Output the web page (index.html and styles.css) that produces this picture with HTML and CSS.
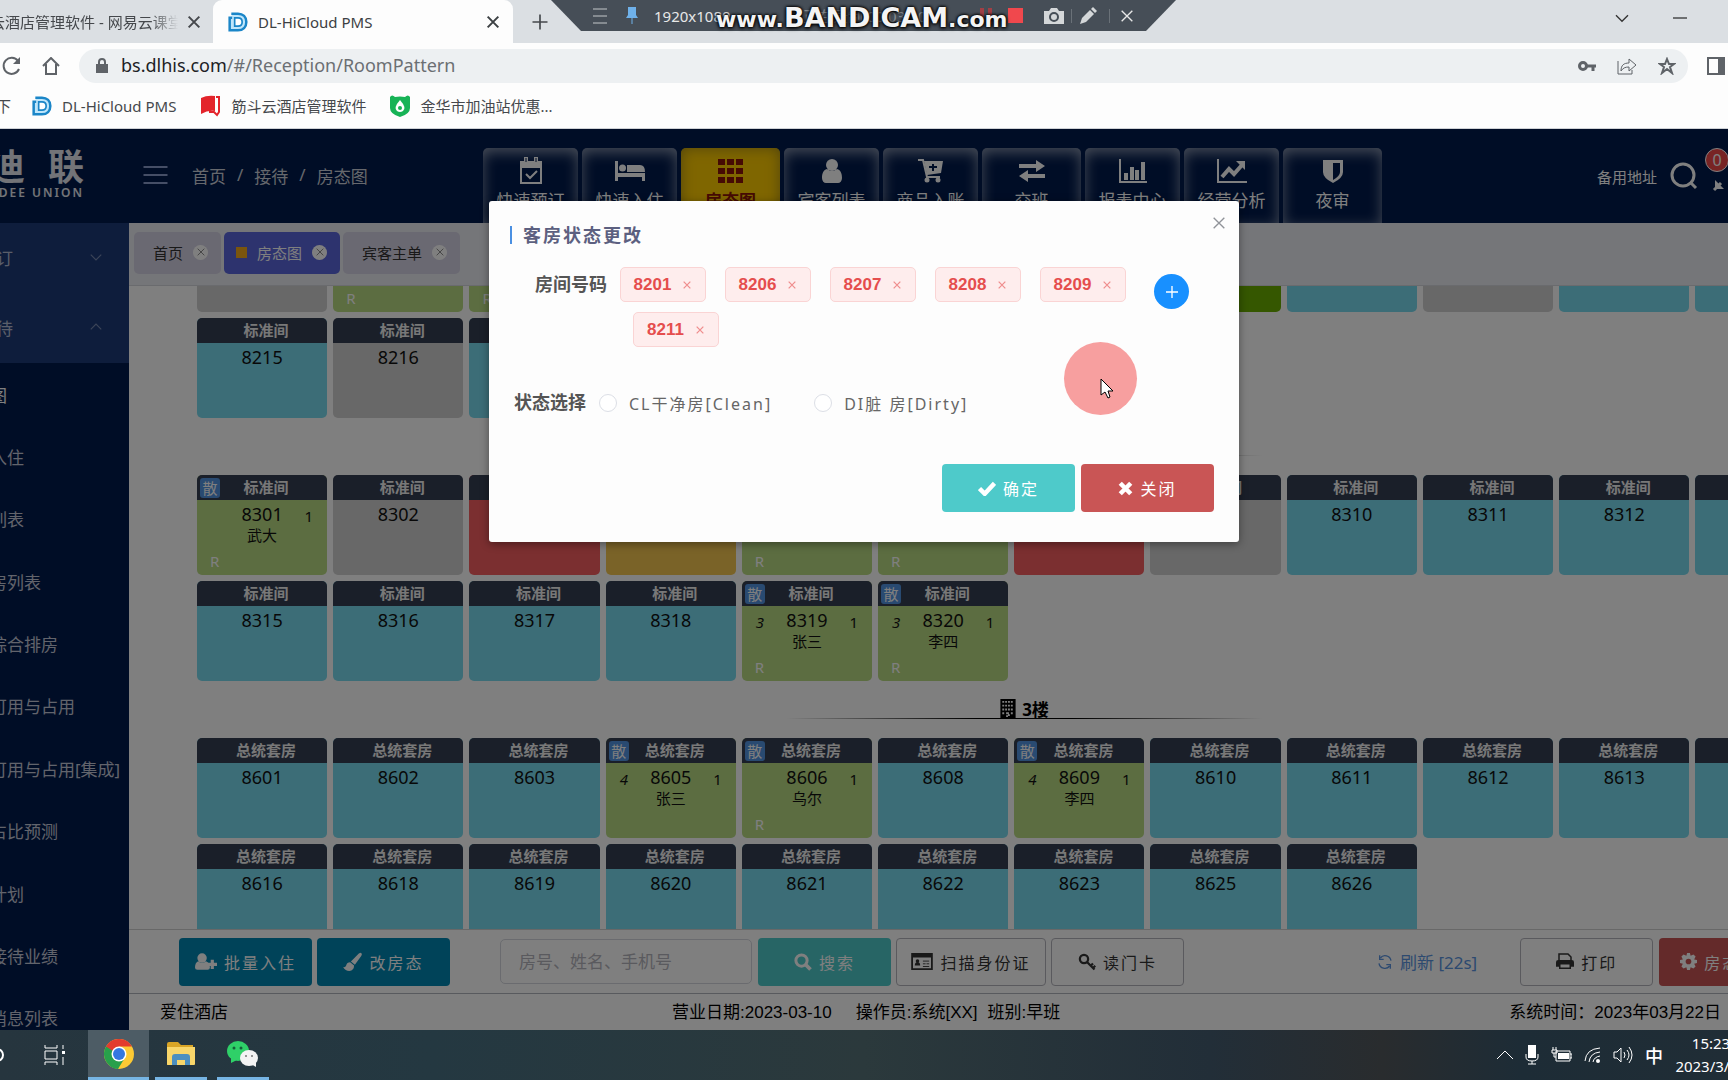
FILE: index.html
```html
<!DOCTYPE html>
<html lang="zh-CN">
<head>
<meta charset="utf-8">
<title>DL-HiCloud PMS</title>
<link rel="stylesheet" href="styles.css">
</head>
<body>
<svg class="defs" aria-hidden="true">
  <symbol id="i-x" viewBox="0 0 24 24"><path d="M4 4l16 16M20 4L4 20" fill="none" stroke="currentColor" stroke-width="2"/></symbol>
  <symbol id="i-xb" viewBox="0 0 24 24"><path d="M4 4l16 16M20 4L4 20" fill="none" stroke="currentColor" stroke-width="3"/></symbol>
  <symbol id="i-down" viewBox="0 0 24 24"><path d="M3 8l9 9 9-9" fill="none" stroke="currentColor" stroke-width="2"/></symbol>
  <symbol id="i-up" viewBox="0 0 24 24"><path d="M3 16l9-9 9 9" fill="none" stroke="currentColor" stroke-width="2"/></symbol>
  <symbol id="i-dl" viewBox="0 0 24 24"><path d="M4 2h8c6 0 10 4 10 10s-4 10-10 10H2V7h3" fill="#bfe6fb" stroke="#1b86c8" stroke-width="3"/><path d="M8 7h4c3 0 5 2 5 5s-2 5-5 5H8z" fill="#fff" stroke="#1b86c8" stroke-width="2"/></symbol>
  <symbol id="i-burger" viewBox="0 0 24 20"><path d="M0 2h24M0 10h24M0 18h24" stroke="currentColor" stroke-width="2"/></symbol>
  <symbol id="i-calendar" viewBox="0 0 24 28"><path d="M2 5h20v21H2z" fill="none" stroke="currentColor" stroke-width="2"/><path d="M1 4h22v7H1zM5 0h4v7H5zM15 0h4v7h-4z" fill="currentColor"/><path d="M7 1v4M17 1v4" stroke="#001a4c" stroke-width="1"/><path d="M7 17l4 4 7-7" fill="none" stroke="currentColor" stroke-width="2"/></symbol>
  <symbol id="i-bed" viewBox="0 0 30 24"><path d="M0 2h3v12h27v8h-3v-4H3v4H0z" fill="currentColor"/><circle cx="7.500" cy="9" r="3.500" fill="currentColor"/><path d="M12 6h13q5 0 5 7H12z" fill="currentColor"/></symbol>
  <symbol id="i-grid" viewBox="0 0 26 26"><path d="M0 1h7v6H0zM9 1h7v6H9zM18 1h7v6h-7zM0 10h7v6H0zM9 10h7v6H9zM18 10h7v6h-7zM0 19h7v6H0zM9 19h7v6H9zM18 19h7v6h-7z" fill="currentColor"/></symbol>
  <symbol id="i-user" viewBox="0 0 20 24"><circle cx="10" cy="6" r="6" fill="currentColor"/><path d="M5 10q5 4 10 0c4 1 5 5 5 9 0 3-2 5-4 5H4c-2 0-4-2-4-5 0-4 1-8 5-9z" fill="currentColor"/></symbol>
  <symbol id="i-cart" viewBox="0 0 26 24"><path d="M0 1h5l4 17h13" fill="none" stroke="currentColor" stroke-width="2"/><path d="M6 2h19l-2 12-14 2z" fill="currentColor"/><path d="M15 5v7M11 8h8" stroke="#001a4c" stroke-width="2"/><circle cx="9" cy="21" r="2.500" fill="currentColor"/><circle cx="20" cy="21" r="2.500" fill="currentColor"/></symbol>
  <symbol id="i-swap" viewBox="0 0 26 24"><path d="M0 5h17V1l9 6-9 6V9H0zM26 15H9v-4l-9 6 9 6v-4h17z" fill="currentColor"/></symbol>
  <symbol id="i-bars" viewBox="0 0 28 24"><path d="M1 0v23h27" fill="none" stroke="currentColor" stroke-width="2"/><path d="M5 14h4v7H5zM11 8h4v13h-4zM16 11h4v10h-4zM22 3h4v18h-4z" fill="currentColor"/></symbol>
  <symbol id="i-line" viewBox="0 0 30 24"><path d="M1 0v23h29" fill="none" stroke="currentColor" stroke-width="2"/><path d="M5 18l7-8 5 5 8-9" fill="none" stroke="currentColor" stroke-width="4"/><path d="M19 2h9v9z" fill="currentColor"/></symbol>
  <symbol id="i-shield" viewBox="0 0 20 24"><path d="M0 1h20v12q0 6-10 11Q0 19 0 13z" fill="currentColor"/><path d="M10 4h7v9q0 4-7 8z" fill="#001a4c"/></symbol>
  <symbol id="i-search" viewBox="0 0 24 24"><circle cx="10" cy="10" r="7.500" fill="none" stroke="currentColor" stroke-width="4"/><path d="M15 15l7 7" stroke="currentColor" stroke-width="5"/></symbol>
  <symbol id="i-find" viewBox="0 0 28 28"><circle cx="13" cy="13" r="11" fill="none" stroke="currentColor" stroke-width="3"/><path d="M20 20l6 6" stroke="currentColor" stroke-width="3"/></symbol>
  <symbol id="i-building" viewBox="0 0 16 20"><path d="M0 0h16v20H0z" fill="currentColor"/><path d="M2 3h12M2 7h12M2 11h12M2 15h3M11 15h3M7 15h2v3H7z" stroke="#fff" stroke-width="2" stroke-dasharray="2 1"/></symbol>
  <symbol id="i-adduser" viewBox="0 0 28 22"><circle cx="9" cy="6" r="6" fill="currentColor"/><path d="M4 10q5 4 10 0 5 2 5 8 0 3-3 3H3q-3 0-3-3 0-6 4-8z" fill="currentColor"/><path d="M22 8v12M16 14h12" stroke="currentColor" stroke-width="4"/></symbol>
  <symbol id="i-brush" viewBox="0 0 24 24"><path d="M22 1q3 1 1 4l-8 11-5-4L20 2zM9 13l5 4q0 6-6 7-5 0-8-5 3 1 4-2 1-4 5-4z" fill="currentColor"/></symbol>
  <symbol id="i-id" viewBox="0 0 24 20"><path d="M1 1h22v17H1z" fill="none" stroke="currentColor" stroke-width="2"/><path d="M1 1h22v4H1zM4 14q0-4 3-4t3 4z" fill="currentColor"/><circle cx="7" cy="9" r="2" fill="currentColor"/><path d="M13 9h7M13 12h3M17 12h3M13 15h7" stroke="currentColor" stroke-width="1"/></symbol>
  <symbol id="i-key" viewBox="0 0 24 24"><circle cx="8" cy="8" r="5.500" fill="none" stroke="currentColor" stroke-width="3"/><path d="M12 12l10 10M17 17l3-3M20 20l3-3" stroke="currentColor" stroke-width="3"/></symbol>
  <symbol id="i-refresh" viewBox="0 0 24 24"><path d="M21 10A9 9 0 0 0 5 6M3 14a9 9 0 0 0 16 4" fill="none" stroke="currentColor" stroke-width="2"/><path d="M4 2v6h6M20 22v-6h-6" fill="none" stroke="currentColor" stroke-width="2"/></symbol>
  <symbol id="i-print" viewBox="0 0 24 22"><path d="M4 10V1h12l4 4v5" fill="none" stroke="currentColor" stroke-width="2"/><path d="M0 12q0-3 3-3h18q3 0 3 3v6H0z" fill="currentColor"/><path d="M5 14h14v6H5z" fill="#fff" stroke="currentColor" stroke-width="2"/></symbol>
  <symbol id="i-gear" viewBox="0 0 24 24"><path d="M10 0h4l1 4 4-2 3 3-2 4 4 1v4l-4 1 2 4-3 3-4-2-1 4h-4l-1-4-4 2-3-3 2-4-4-1v-4l4-1-2-4 3-3 4 2z" fill="currentColor"/><circle cx="12" cy="12" r="4" fill="#c95555"/></symbol>
  <symbol id="i-check" viewBox="0 0 24 20"><path d="M2 10l7 7L22 3" fill="none" stroke="currentColor" stroke-width="6"/></symbol>
  <symbol id="i-times" viewBox="0 0 20 20"><path d="M3 3l14 14M17 3L3 17" fill="none" stroke="currentColor" stroke-width="6"/></symbol>
  <symbol id="i-plus" viewBox="0 0 24 24"><path d="M12 3v18M3 12h18" stroke="currentColor" stroke-width="2"/></symbol>
</svg>

<header class="browser">
  <div class="tabstrip">
    <div class="btab back-tab"><span class="btab-title">云酒店管理软件 - 网易云课堂</span><button class="ico-btn" aria-label="关闭标签页"><svg width="16" height="16"><use href="#i-xb"/></svg></button></div>
    <div class="btab front-tab"><svg width="20" height="22"><use href="#i-dl"/></svg><span class="btab-title">DL-HiCloud PMS</span><button class="ico-btn" aria-label="关闭标签页"><svg width="16" height="16"><use href="#i-xb"/></svg></button></div>
    <button class="ico-btn new-tab" aria-label="新标签页"><svg width="20" height="20"><use href="#i-plus"/></svg></button>
    <div class="win-ctl">
      <svg width="16" height="16"><use href="#i-down"/></svg>
      <svg width="14" height="16"><path d="M0 8h14" stroke="#000" stroke-width="1"/></svg>
    </div>
  </div>
  <div class="toolbar">
    <svg width="20" height="20" viewBox="0 0 20 20"><path d="M16 5a8 8 0 1 0 1 8" fill="none" stroke="#5f6368" stroke-width="2"/><path d="M18 1v7h-7z" fill="#5f6368"/></svg>
    <svg class="home" width="18" height="18" viewBox="0 0 18 18"><path d="M1 9l8-8 8 8M4 7v10h10V7" fill="none" stroke="#5f6368" stroke-width="2"/></svg>
    <div class="omnibox">
      <svg width="12" height="15" viewBox="0 0 12 15"><path d="M0 6h12v9H0z" fill="#5f6368"/><path d="M3 6V4a3 3 0 0 1 6 0v2" fill="none" stroke="#5f6368" stroke-width="2"/></svg>
      <span class="url">bs.dlhis.com<i>/#/Reception/RoomPattern</i></span>
      <svg width="18" height="12" viewBox="0 0 18 12"><circle cx="5" cy="6" r="3.500" fill="none" stroke="#5f6368" stroke-width="3"/><path d="M8 6h10M15 6v5" stroke="#5f6368" stroke-width="3"/></svg>
      <svg width="20" height="18" viewBox="0 0 20 18"><path d="M1 4v13h14v-4M4 14c0-6 3-8 8-8V2l7 6-7 6v-4c-4 0-6 1-8 4z" fill="none" stroke="#5f6368" stroke-width="1"/></svg>
      <svg width="18" height="18" viewBox="0 0 18 18"><path d="M9 2l2 5h5l-4 3 2 6-5-4-5 4 2-6-4-3h5z" fill="none" stroke="#5f6368" stroke-width="2"/></svg>
    </div>
    <svg width="18" height="18" viewBox="0 0 18 18"><path d="M1 1h16v16H1z" fill="none" stroke="#5f6368" stroke-width="2"/><path d="M11 1h6v16h-6z" fill="#5f6368"/></svg>
  </div>
  <nav class="bookmarks">
    <a href="#" class="cut">下</a>
    <a href="#"><svg width="20" height="22"><use href="#i-dl"/></svg>DL-HiCloud PMS</a>
    <a href="#"><svg width="21" height="22" viewBox="0 0 21 22"><path d="M1 3q6-3 14-2v15q-7-1-14 3z" fill="#e3242b"/><path d="M16 2h3v15l-2 3-3-3H9" fill="none" stroke="#e3242b" stroke-width="2"/></svg>筋斗云酒店管理软件</a>
    <a href="#"><svg width="20" height="22" viewBox="0 0 20 22"><path d="M0 2q2-3 5 0 5-1 10 0 3-3 5 0v11q0 6-10 9Q0 19 0 13z" fill="#17b356"/><path d="M10 5q7 8 3 11-3 2-6 0-4-3 3-11z" fill="#fff"/><circle cx="10" cy="13" r="2" fill="#17b356"/></svg>金华市加油站优惠...</a>
  </nav>
</header>

<div class="recorder">
  <svg class="rec-bg" viewBox="0 0 625 31" preserveAspectRatio="none"><path d="M0 0h625l-30 31H30z" fill="#464e57"/></svg>
  <div class="rec-row">
    <svg width="14" height="16" viewBox="0 0 14 16"><path d="M0 1h14M0 8h14M0 15h14" stroke="#c3c7ca" stroke-width="1"/></svg>
    <svg class="pin" width="12" height="17" viewBox="0 0 12 17"><path d="M2 0h8v8l2 3H0l2-3z" fill="#6fb1ea"/><path d="M6 11v6" stroke="#6fb1ea"/></svg>
    <span class="rec-size">1920x1080</span>
    <span class="rec-time">正在录制 00:03:20</span>
    <svg width="12" height="16" viewBox="0 0 12 16"><path d="M0 0h4v16H0zM8 0h4v16H8z" fill="#a13f45"/></svg>
    <svg class="stop" width="15" height="15" viewBox="0 0 15 15"><path d="M0 0h15v15H0z" fill="#f0484d"/></svg>
    <svg class="cam" width="20" height="16" viewBox="0 0 20 16"><path d="M0 3h5l2-3h6l2 3h5v13H0z" fill="#d4d7d9"/><circle cx="10" cy="9" r="4" fill="none" stroke="#464e57" stroke-width="2"/></svg>
    <span class="sep"></span>
    <svg width="17" height="17" viewBox="0 0 17 17"><path d="M0 17l2-6 8-8 4 4-8 8zM11 2l2-2 4 4-2 2z" fill="#d4d7d9"/></svg>
    <span class="sep wide-sep"></span>
    <svg width="16" height="16"><use href="#i-x"/></svg>
  </div>
  <div class="watermark">www.<b>BANDICAM</b>.com</div>
</div>

<div class="app">
  <header class="app-head">
    <div class="logo"><strong><span>迪</span><span>联</span></strong><small>DEE UNION</small></div>
    <div class="crumb-area">
      <svg width="25" height="20"><use href="#i-burger"/></svg>
      <nav class="crumbs"><a href="#">首页</a><span>/</span><a href="#">接待</a><span>/</span><a href="#">房态图</a></nav>
    </div>
    <nav class="tiles">
      <a href="#"><svg width="24" height="28"><use href="#i-calendar"/></svg>快速预订</a>
      <a href="#"><svg width="30" height="28"><use href="#i-bed"/></svg>快速入住</a>
      <a href="#" class="wide on"><svg width="26" height="28"><use href="#i-grid"/></svg>房态图</a>
      <a href="#"><svg width="20" height="28"><use href="#i-user"/></svg>宾客列表</a>
      <a href="#"><svg width="26" height="28"><use href="#i-cart"/></svg>商品入账</a>
      <a href="#" class="wide"><svg width="26" height="28"><use href="#i-swap"/></svg>交班</a>
      <a href="#"><svg width="28" height="28"><use href="#i-bars"/></svg>报表中心</a>
      <a href="#"><svg width="30" height="28"><use href="#i-line"/></svg>经营分析</a>
      <a href="#" class="wide"><svg width="20" height="28"><use href="#i-shield"/></svg>夜审</a>
    </nav>
    <div class="head-right">
      <a href="#">备用地址</a>
      <svg width="28" height="28"><use href="#i-find"/></svg>
      <div class="full"><svg width="26" height="26" viewBox="0 0 26 26"><path d="M3 23l7-7" fill="none" stroke="currentColor" stroke-width="3"/><path d="M4 13l9 9H4z" fill="currentColor"/></svg><em>0</em></div>
    </div>
  </header>

  <div class="app-body">
    <aside class="side">
      <a class="group" href="#">订<svg width="14" height="14"><use href="#i-down"/></svg></a>
      <a class="group" href="#">待<svg width="14" height="14"><use href="#i-up"/></svg></a>
      <nav class="sub">
        <a href="#" class="cur">图</a><a href="#">入住</a><a href="#">列表</a><a href="#">房列表</a><a href="#">综合排房</a><a href="#">可用与占用</a><a href="#">可用与占用[集成]</a><a href="#">占比预测</a><a href="#">计划</a><a href="#">接待业绩</a><a href="#">消息列表</a>
      </nav>
    </aside>

    <main class="main">
      <div class="page-tabs">
        <a href="#">首页<i><svg width="10" height="10"><use href="#i-x"/></svg></i></a>
        <a href="#" class="on"><span class="mark"></span>房态图<i><svg width="10" height="10"><use href="#i-x"/></svg></i></a>
        <a href="#">宾客主单<i><svg width="10" height="10"><use href="#i-x"/></svg></i></a>
      </div>

      <section class="rooms">
        <div class="floors">
          <div class="grid">
            <div class="room dirty"></div>
            <div class="room stay"><span class="flag">R</span></div>
            <div class="room stay"><span class="flag">R</span></div>
            <div class="room dirty"></div>
            <div class="room dirty"></div>
            <div class="room dirty"></div>
            <div class="room dirty"></div>
            <div class="room arrive"></div>
            <div class="room"></div>
            <div class="room dirty"></div>
            <div class="room"></div>
            <div class="room"></div>
            <div class="room"></div>
            <div class="room"></div>
            <div class="room"><h3>标准间</h3><b>8215</b></div>
            <div class="room dirty"><h3>标准间</h3><b>8216</b></div>
            <div class="room"><h3>标准间</h3><b>8217</b></div>
          </div>
          <h2 class="floor"><span><svg width="16" height="19"><use href="#i-building"/></svg>2楼</span></h2>
          <div class="grid">
            <div class="room stay"><span class="kind">散</span><h3>标准间</h3><b>8301</b><span class="num">1</span><p>武大</p><span class="flag">R</span></div>
            <div class="room dirty"><h3>标准间</h3><b>8302</b></div>
            <div class="room repair"><h3>标准间</h3><b>8303</b></div>
            <div class="room hold"><h3>标准间</h3><b>8305</b></div>
            <div class="room stay"><h3>标准间</h3><b>8306</b><span class="flag">R</span></div>
            <div class="room stay"><h3>标准间</h3><b>8307</b><span class="flag">R</span></div>
            <div class="room repair"><h3>标准间</h3><b>8308</b></div>
            <div class="room dirty"><h3>标准间</h3><b>8309</b></div>
            <div class="room"><h3>标准间</h3><b>8310</b></div>
            <div class="room"><h3>标准间</h3><b>8311</b></div>
            <div class="room"><h3>标准间</h3><b>8312</b></div>
            <div class="room"><h3></h3></div>
            <div class="room"><h3></h3></div>
            <div class="room"><h3></h3></div>
            <div class="room"><h3>标准间</h3><b>8315</b></div>
            <div class="room"><h3>标准间</h3><b>8316</b></div>
            <div class="room"><h3>标准间</h3><b>8317</b></div>
            <div class="room"><h3>标准间</h3><b>8318</b></div>
            <div class="room stay"><span class="kind">散</span><h3>标准间</h3><i class="days">3</i><b>8319</b><span class="num">1</span><p>张三</p><span class="flag">R</span></div>
            <div class="room stay"><span class="kind">散</span><h3>标准间</h3><i class="days">3</i><b>8320</b><span class="num">1</span><p>李四</p><span class="flag">R</span></div>
          </div>
          <h2 class="floor"><span><svg width="16" height="19"><use href="#i-building"/></svg>3楼</span></h2>
          <div class="grid">
            <div class="room"><h3>总统套房</h3><b>8601</b></div>
            <div class="room"><h3>总统套房</h3><b>8602</b></div>
            <div class="room"><h3>总统套房</h3><b>8603</b></div>
            <div class="room stay"><span class="kind">散</span><h3>总统套房</h3><i class="days">4</i><b>8605</b><span class="num">1</span><p>张三</p></div>
            <div class="room stay"><span class="kind">散</span><h3>总统套房</h3><b>8606</b><span class="num">1</span><p>乌尔</p><span class="flag">R</span></div>
            <div class="room"><h3>总统套房</h3><b>8608</b></div>
            <div class="room stay"><span class="kind">散</span><h3>总统套房</h3><i class="days">4</i><b>8609</b><span class="num">1</span><p>李四</p></div>
            <div class="room"><h3>总统套房</h3><b>8610</b></div>
            <div class="room"><h3>总统套房</h3><b>8611</b></div>
            <div class="room"><h3>总统套房</h3><b>8612</b></div>
            <div class="room"><h3>总统套房</h3><b>8613</b></div>
            <div class="room"><h3></h3></div>
            <div class="room"><h3></h3></div>
            <div class="room"><h3></h3></div>
            <div class="room"><h3>总统套房</h3><b>8616</b></div>
            <div class="room"><h3>总统套房</h3><b>8618</b></div>
            <div class="room"><h3>总统套房</h3><b>8619</b></div>
            <div class="room"><h3>总统套房</h3><b>8620</b></div>
            <div class="room"><h3>总统套房</h3><b>8621</b></div>
            <div class="room"><h3>总统套房</h3><b>8622</b></div>
            <div class="room"><h3>总统套房</h3><b>8623</b></div>
            <div class="room"><h3>总统套房</h3><b>8625</b></div>
            <div class="room"><h3>总统套房</h3><b>8626</b></div>
          </div>
        </div>
      </section>

      <div class="actions">
        <button class="btn blue"><svg width="22" height="18"><use href="#i-adduser"/></svg>批量入住</button>
        <button class="btn blue"><svg width="19" height="19"><use href="#i-brush"/></svg>改房态</button>
        <input class="search" type="text" placeholder="房号、姓名、手机号" aria-label="房号、姓名、手机号">
        <button class="btn teal"><svg width="18" height="18"><use href="#i-search"/></svg>搜索</button>
        <button class="btn line id"><svg width="22" height="18"><use href="#i-id"/></svg>扫描身份证</button>
        <button class="btn line"><svg width="18" height="18"><use href="#i-key"/></svg>读门卡</button>
        <a class="refresh" href="#"><svg width="16" height="16"><use href="#i-refresh"/></svg>刷新 [22s]</a>
        <button class="btn line"><svg width="18" height="17"><use href="#i-print"/></svg>打印</button>
        <button class="btn red set"><svg width="17" height="17"><use href="#i-gear"/></svg>房态</button>
      </div>

      <footer class="status">
        <span class="hotel">爱住酒店</span>
        <span class="shift"><span>营业日期:2023-03-10</span><span>操作员:系统[XX]</span><span>班别:早班</span></span>
        <span class="clock">系统时间：2023年03月22日</span>
      </footer>
    </main>
  </div>

  <div class="mask">
    <section class="modal" role="dialog" aria-label="客房状态更改">
      <header><h1>客房状态更改</h1><button class="ico-btn" aria-label="关闭窗口"><svg width="16" height="16"><use href="#i-x"/></svg></button></header>
      <div class="field tags-field">
        <span class="label">房间号码</span>
        <div class="tags">
          <span class="tag">8201<svg width="10" height="10"><use href="#i-xb"/></svg></span>
          <span class="tag">8206<svg width="10" height="10"><use href="#i-xb"/></svg></span>
          <span class="tag">8207<svg width="10" height="10"><use href="#i-xb"/></svg></span>
          <span class="tag">8208<svg width="10" height="10"><use href="#i-xb"/></svg></span>
          <span class="tag">8209<svg width="10" height="10"><use href="#i-xb"/></svg></span>
          <span class="tag second">8211<svg width="10" height="10"><use href="#i-xb"/></svg></span>
        </div>
        <button class="add" aria-label="添加房间"><svg width="16" height="16"><use href="#i-plus"/></svg></button>
      </div>
      <div class="field state-field">
        <span class="label">状态选择</span>
        <label class="radio"><input type="radio" name="state">CL干净房[Clean]</label>
        <label class="radio"><input type="radio" name="state">DI脏 房[Dirty]</label>
      </div>
      <div class="modal-foot">
        <button class="btn ok"><svg width="18" height="15"><use href="#i-check"/></svg>确定</button>
        <button class="btn red"><svg width="15" height="15"><use href="#i-times"/></svg>关闭</button>
      </div>
      <div class="pointer"><svg width="14" height="22" viewBox="0 0 14 22"><path d="M1 1v16l4-3 3 6 2-1-2-6h5z" fill="#fff" stroke="#000"/></svg></div>
    </section>
  </div>
</div>

<footer class="taskbar">
  <svg class="cortana" width="5" height="16" viewBox="0 0 5 16"><circle cx="-3" cy="8" r="6" fill="none" stroke="#fff" stroke-width="2"/></svg>
  <svg class="views" width="22" height="20" viewBox="0 0 22 20"><path d="M1 0v3h12V0M1 20v-3h12v3M1 6h12v8H1zM19 0v4M19 12v8" fill="none" stroke="#fff"/><path d="M18 6h3v3h-3z" fill="#fff"/></svg>
  <button class="task active" aria-label="Chrome"><svg width="30" height="30" viewBox="0 0 30 30"><circle cx="15" cy="15" r="15" fill="#fcc934"/><path d="M2 7.500A15 15 0 0 0 14 30l7-11.500L15 15z" fill="#28a04b"/><path d="M2 7.500L9 19l6-4V7.500z" fill="#28a04b"/><path d="M2 7.500A15 15 0 0 1 28 7.500H15L9 12z" fill="#e33b2e"/><circle cx="15" cy="15" r="7.500" fill="#fff"/><circle cx="15" cy="15" r="6" fill="#3477e0"/></svg></button>
  <button class="task" aria-label="文件资源管理器"><svg width="28" height="24" viewBox="0 0 28 24"><path d="M0 2q0-2 2-2h9l3 3h12v20H0z" fill="#d9a526"/><path d="M0 5h28v17q0 1-1 1H1q-1 0-1-1z" fill="#f8d66a"/><path d="M5 23v-8q0-3 3-3h12q3 0 3 3v8h-5v-5h-8v5z" fill="#4c8fc0"/></svg></button>
  <button class="task" aria-label="微信"><svg width="32" height="26" viewBox="0 0 32 26"><ellipse cx="11" cy="10" rx="11" ry="10" fill="#2fd068"/><path d="M4 16l0 6 6-3z" fill="#2fd068"/><ellipse cx="22" cy="17" rx="9" ry="8" fill="#f3f3f3"/><path d="M24 23l5 3v-6z" fill="#f3f3f3"/><circle cx="7" cy="7" r="1.500" fill="#15603a"/><circle cx="14" cy="7" r="1.500" fill="#15603a"/><circle cx="19" cy="15" r="1" fill="#777"/><circle cx="25" cy="15" r="1" fill="#777"/></svg></button>
  <div class="tray">
    <svg width="16" height="18" viewBox="0 0 16 18"><path d="M0 13l8-8 8 8" fill="none" stroke="#fff"/></svg>
    <svg width="14" height="20" viewBox="0 0 14 20"><path d="M3 0h8v13H3z" fill="#fff"/><path d="M1 9v3q0 4 6 4t6-4V9M7 16v3M3 19h8" fill="none" stroke="#fff"/></svg>
    <svg width="21" height="16" viewBox="0 0 21 16"><path d="M5 4h14v10H5zM19 7h2v4h-2M2 0v3M5 0v3M1 3h5v3H1zM3 6v4h2" fill="none" stroke="#fff"/><path d="M7 6h11v6H7z" fill="#fff"/></svg>
    <svg width="17" height="16" viewBox="0 0 17 16"><path d="M1 14Q2 2 16 1M5 15Q6 6 16 5M9 15q1-5 7-6" fill="none" stroke="#fff"/><circle cx="14" cy="14" r="2" fill="#fff"/></svg>
    <svg width="20" height="18" viewBox="0 0 20 18"><path d="M1 6h3l4-4v14l-4-4H1zM11 6q2 3 0 6M14 4q4 5 0 10M16 1q6 8 0 16" fill="none" stroke="#fff"/></svg>
    <span class="ime">中</span>
    <div class="time"><span>15:23</span><span>2023/3/22</span></div>
  </div>
</footer>
</body>
</html>
```
FILE: styles.css
```css
* { box-sizing: border-box; }
html, body { height: 100%; }
body {
  margin: 0;
  display: flex;
  flex-direction: column;
  overflow: hidden;
  font-family: "Noto Sans", "Noto Sans CJK SC", sans-serif;
  font-size: 17px;
  color: #000;
}
a { color: inherit; text-decoration: none; }
h1, h2, h3, p { margin: 0; }
button, input { font: inherit; margin: 0; }
svg { flex: none; display: block; }
.defs { position: absolute; width: 0; height: 0; }
.ico-btn { border: 0; padding: 0; background: none; color: inherit; display: flex; }

/* Browser frame */
.browser { flex: none; background: #fdfdfd; font-size: 15px; color: #45484c; }
.tabstrip { height: 43px; background: #dbdfe3; display: flex; align-items: center; }
.btab { display: flex; align-items: center; height: 43px; }
.btab .btab-title { flex: 1; white-space: nowrap; overflow: hidden; }
.back-tab { width: 213px; padding-right: 11px; }
.back-tab .btab-title {
  margin-left: -10px;
  margin-right: 8px;
  -webkit-mask-image: linear-gradient(90deg, #000 85%, transparent);
  mask-image: linear-gradient(90deg, #000 85%, transparent);
}
.front-tab { width: 300px; padding: 0 12px 0 15px; gap: 10px; background: #fdfdfd; border-radius: 9px 9px 0 0; color: #3c4043; }
.new-tab { margin-left: 17px; }
.win-ctl { margin-left: auto; margin-right: 41px; margin-top: -8px; display: flex; gap: 43px; color: #333; }
.toolbar { height: 45px; display: flex; align-items: center; padding: 0 3px 0 2px; }
.home { margin: 0 19px 0 20px; }
.omnibox { flex: 1; height: 34px; margin: 0 19px 0 0; padding: 0 12px 0 17px; border-radius: 17px; background: #edf0f2; display: flex; align-items: center; gap: 21px; }
.omnibox .url { flex: 1; margin-left: -8px; padding-bottom: 2px; font-size: 18px; color: #202124; }
.url i { font-style: normal; color: #6b6f73; }
.bookmarks { height: 41px; border-bottom: 1px solid #cfd2d6; display: flex; align-items: center; gap: 21px; padding-bottom: 5px; }
.bookmarks a { display: flex; align-items: center; gap: 10px; }
.bookmarks a + a + a { margin-left: 3px; }
.bookmarks .cut { margin-left: -4px; }

/* Screen recorder strip, floats over the browser frame */
.recorder { position: absolute; z-index: 5; top: 0; left: 551px; width: 625px; height: 31px; }
.rec-bg { position: absolute; width: 100%; height: 100%; }
.rec-row { position: relative; height: 31px; display: flex; align-items: center; padding-left: 42px; font-size: 15px; white-space: nowrap; color: #e8e8e8; }
.pin { margin: 0 16px 0 19px; }
.rec-size { width: 77px; }
.rec-time { margin: 0 27px 0 72px; width: 150px; overflow: hidden; color: #8b9095; }
.stop { margin-left: 16px; }
.cam { margin: 0 7px 0 21px; }
.sep { width: 1px; height: 14px; margin-right: 8px; background: #6a7178; }
.wide-sep { margin: 0 9px 0 12px; }
.watermark { position: absolute; left: 165px; top: 2px; font: bold 22px/32px "DejaVu Sans", sans-serif; color: #f4f4f4; text-shadow: 0 0 3px #000, 0 0 3px #000, 0 1px 4px #000; white-space: nowrap; }
.watermark b { font-size: 27px; }

/* Application */
.app { position: relative; flex: 1; min-height: 0; display: flex; flex-direction: column; overflow: hidden; background: #fff; }
.app-head { flex: none; height: 94px; background: #001a4c; color: #e6e9f0; display: flex; }
.logo { width: 84px; height: 94px; display: flex; flex-direction: column; align-items: flex-end; padding-top: 19px; margin-right: 59px; white-space: nowrap; }
.logo strong { font-size: 36px; line-height: 38px; display: flex; gap: 23px; }
.logo small { font-size: 12px; line-height: 14px; letter-spacing: 2px; font-weight: 600; }
.crumb-area { width: 340px; display: flex; align-items: center; gap: 24px; padding-bottom: 2px; color: #8b9ccc; }
.crumbs { display: flex; gap: 11px; color: #cdd1da; }
.tiles { display: flex; gap: 4px; padding-top: 19px; }
.tiles a { width: 95px; display: flex; flex-direction: column; align-items: center; gap: 4px; padding-top: 9px; line-height: 24px; border-radius: 5px 5px 0 0; box-shadow: inset 0 4px 14px rgba(255,255,255,.55); color: #fff; white-space: nowrap; }
.tiles .wide { width: 99px; }
.tiles .on { background: #ffcc00; color: #8c1408; font-weight: bold; box-shadow: inset 0 0 14px rgba(140,120,30,.8); }
.head-right { margin-left: auto; display: flex; align-items: center; gap: 13px; padding-right: 1px; font-size: 15px; color: #fff; }
.full { position: relative; width: 16px; height: 34px; display: flex; align-items: flex-end; }
.full em { position: absolute; left: -6px; top: -11px; width: 24px; height: 24px; border: 1px solid #fff; border-radius: 12px; background: #f04848; font: 16px/22px "Noto Sans", sans-serif; text-align: center; }
.app-body { flex: 1; min-height: 0; display: flex; }

.side { flex: none; width: 129px; background: #001a4c; color: #c5c8d8; overflow: hidden; }
.group { height: 70px; padding: 0 26px 2px 0; background: #1c3a78; display: flex; align-items: center; justify-content: space-between; text-indent: -4px; color: #b4bdd4; }
.group svg { opacity: .6; }
.sub { height: 686px; display: flex; flex-direction: column; margin-left: -10px; white-space: nowrap; }
.sub a { flex: 1; display: flex; align-items: center; }
.sub .cur { color: #fff; }

.main { flex: 1; min-width: 0; display: flex; flex-direction: column; }
.page-tabs { flex: none; height: 63px; padding: 9px 5px 0; display: flex; gap: 3px; background: #eaecf2; border-bottom: 1px solid #d4d6dc; font-size: 15px; }
.page-tabs a { height: 42px; padding: 0 13px 2px 19px; display: flex; align-items: center; gap: 10px; border-radius: 5px; background: #d5d2e4; color: #333; }
.page-tabs .on { background: #5b66dc; color: #fff; padding-left: 12px; }
.mark { width: 11px; height: 11px; background: #f5ab1c; }
.page-tabs i { width: 15px; height: 15px; border-radius: 8px; background: #fff; color: #777; display: flex; align-items: center; justify-content: center; }

.rooms { flex: 1; min-height: 0; overflow: hidden; }
.floors { width: 1791px; margin-top: -74px; }
.grid { width: 1901px; margin-left: 68px; display: grid; grid-template-columns: repeat(14, 1fr); gap: 6px; }
.room { position: relative; height: 100px; border-radius: 5px; overflow: hidden; background: #78daee; color: #111; text-align: center; line-height: 20px; }
.room h3 { height: 25px; padding-left: 8px; background: #343e52; color: #f0f0f0; font-size: 15px; line-height: 24px; }
.room b { display: block; font-size: 18px; line-height: 28px; font-weight: normal; }
.room p { font-size: 15px; line-height: 14px; }
.room.dirty { background: #d0d0d0; }
.room.stay { background: #b8da82; }
.room.arrive { background: #6aae00; }
.room.repair { background: #f65e60; }
.room.hold { background: #f4c650; }
.kind { position: absolute; left: 3px; top: 3px; width: 20px; height: 20px; border-radius: 3px; background: #5294e2; color: #fff; font-size: 15px; line-height: 20px; }
.num, .days, .flag { position: absolute; font-size: 15px; }
.num { right: 14px; top: 31px; }
.days { left: 14px; top: 31px; }
.flag { left: 13px; bottom: 4px; color: #fff; }
.floor { height: 57px; display: flex; justify-content: center; align-items: flex-start; font-size: 17px; }
.floor + .grid + .floor span { color: #000; }
.floor span { width: 475px; height: 38px; padding-top: 18px; display: flex; justify-content: center; align-items: center; gap: 6px; border-bottom: 1px solid; border-image: linear-gradient(90deg, transparent, #000 40%, #000 60%, transparent) 1; }

.actions { flex: none; height: 65px; border-top: 1px solid #d0d0d0; border-bottom: 1px solid #b0b4bc; padding-left: 50px; display: flex; align-items: center; gap: 5px; overflow: hidden; }
.btn { flex: none; width: 133px; height: 48px; border: 0; border-radius: 4px; display: flex; align-items: center; justify-content: center; gap: 7px; padding: 0; font-size: 16px; letter-spacing: 2px; color: #fff; white-space: nowrap; }
.blue { background: #0086b2; }
.teal { background: #4ecbcb; }
.red { background: #c95555; }
.line { background: #fff; border: 1px solid #b4b4bc; color: #333; }
.line.id { width: 150px; }
.search { flex: none; width: 252px; height: 45px; margin: 0 1px 0 45px; padding: 0 18px; border: 1px solid #d4d7de; border-radius: 5px; background: #fff; }
.search::placeholder { color: #b4b4bc; opacity: 1; }
.refresh { margin: 0 38px 0 188px; display: flex; align-items: center; gap: 7px; color: #5a94e0; white-space: nowrap; }
.set { margin-left: 1px; justify-content: flex-start; padding-left: 21px; }
.status { flex: none; height: 36px; display: flex; align-items: center; padding: 0 7px 4px 31px; font-family: "Liberation Sans", "Noto Sans CJK SC", sans-serif; white-space: nowrap; }
.hotel { width: 512px; }
.shift { display: flex; gap: 10px; }
.shift span:first-child { margin-right: 14px; }
.clock { margin-left: auto; }

/* Dialog */
.mask { position: absolute; inset: 0; background: rgba(0,0,0,.5); display: flex; justify-content: center; align-items: flex-start; padding-top: 72px; }
.modal { position: relative; width: 750px; height: 341px; border-radius: 3px; background: #fdfdfd; box-shadow: 0 2px 8px rgba(0,0,0,.4); padding: 14px 25px 0 21px; display: flex; flex-direction: column; }
.modal header { display: flex; justify-content: space-between; align-items: flex-start; height: 52px; margin-right: -13px; color: #909399; }
.modal h1 { margin-top: 11px; padding-left: 11px; border-left: 2px solid #4a90e2; font-size: 18px; line-height: 18px; letter-spacing: 2px; color: #5c6080; }
.field { display: flex; }
.label { font-size: 18px; font-weight: bold; line-height: 34px; color: #555; white-space: nowrap; }
.tags-field { height: 118px; padding-left: 25px; }
.tags { width: 534px; margin-left: 13px; display: flex; flex-wrap: wrap; align-content: flex-start; gap: 10px 19px; }
.tag { width: 86px; height: 35px; border: 1px solid #fad4d4; border-radius: 5px; background: #feeded; color: #e54d4d; font: bold 17px "Liberation Sans", sans-serif; display: flex; align-items: center; justify-content: center; gap: 11px; }
.tag svg { opacity: .6; }
.tag.second { margin-left: 13px; }
.add { width: 35px; height: 35px; margin-top: 7px; border: 0; border-radius: 18px; background: #1890ff; color: #fff; display: flex; align-items: center; justify-content: center; padding: 0; }
.state-field { height: 79px; padding-left: 4px; align-items: flex-start; }
.radio { display: flex; align-items: center; height: 35px; gap: 12px; margin-left: 13px; font-size: 16px; letter-spacing: 2px; color: #666; white-space: pre; }
.radio + .radio { margin-left: 42px; }
.radio input { appearance: none; width: 18px; height: 18px; border: 1px solid #dcdfe6; border-radius: 9px; background: #fff; }
.modal-foot { display: flex; justify-content: flex-end; gap: 6px; }
.ok { background: #4ecaca; }
.pointer { position: absolute; left: 575px; top: 141px; width: 73px; height: 73px; padding: 36px 0 0 36px; border-radius: 37px; background: #f79f9f; }

/* Windows taskbar */
.taskbar { flex: none; height: 50px; display: flex; align-items: center; background: linear-gradient(90deg, #26353e, #243841 25%, #2b393c 50%, #222e38 70%, #292c2e 80%, #1d2c36 88%, #202d36); color: #fff; overflow: hidden; }
.views { margin: 0 22px 0 39px; }
.task { width: 52px; height: 50px; margin: 0 10px 0 0; padding: 0; border: 0; border-bottom: 3px solid #76b5e4; background: none; display: flex; align-items: center; justify-content: center; }
.task.active { width: 61px; margin-right: 6px; background: #4d5c65; }
.tray { margin-left: auto; display: flex; align-items: center; gap: 12px; margin-right: -19px; }
.ime { font-size: 18px; font-weight: 500; }
.time { width: 72px; font-size: 15px; line-height: 23px; display: flex; flex-direction: column; align-items: center; }
```
